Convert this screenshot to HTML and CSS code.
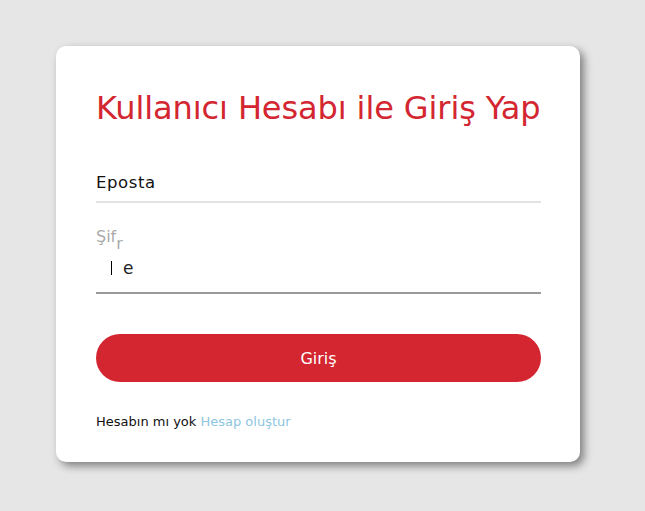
FILE: index.html
```html
<!DOCTYPE html>
<html lang="tr">
<head>
<meta charset="utf-8">
<title>Giriş</title>
<link rel="stylesheet" href="styles.css">
</head>
<body>
<main class="card">
  <h1 class="title">Kullanıcı Hesabı ile Giriş Yap</h1>
  <div class="field field-email">
    <span class="value">Eposta</span>
  </div>
  <div class="field field-pass">
    <div class="float-label"><span>Şif</span><span class="drop">r</span></div>
    <div class="pass-line"><span class="caret"></span><span class="ghost">e</span></div>
  </div>
  <button class="btn" type="button">Giriş</button>
  <p class="footer">Hesabın mı yok <a class="link" href="#">Hesap oluştur</a></p>
</main>
</body>
</html>
```
FILE: styles.css
```css
html, body {
  margin: 0;
  padding: 0;
  background: #e6e6e6;
  height: 100%;
}
body {
  font-family: "DejaVu Sans", "Open Sans", sans-serif;
  padding: 46px 0 0 56px;
  box-sizing: border-box;
}
.card {
  width: 524px;
  height: 416px;
  box-sizing: border-box;
  background: #fff;
  border-radius: 10px;
  box-shadow: 4px 4px 8px rgba(0,0,0,0.45);
  padding: 40px 40px 0 40px;
}
.title {
  margin: 0;
  color: #d32630;
  font-weight: 400;
  font-size: 32px;
  line-height: 42px;
  padding-top: 1px;
  white-space: nowrap;
  letter-spacing: -0.1px;
}
.field {
  width: 445px;
}
.field-email {
  margin-top: 31px;
  border-bottom: 2px solid #e3e3e3;
  height: 43px;
  box-sizing: border-box;
}
.field-email .value {
  display: block;
  font-size: 16.5px;
  letter-spacing: 0.6px;
  line-height: 22px;
  padding-top: 12px;
  color: #111;
}
.field-pass {
  margin-top: 24px;
  border-bottom: 2px solid #9a9a9a;
  height: 67px;
  box-sizing: border-box;
}
.float-label {
  font-size: 16px;
  line-height: 20px;
  color: #aaa;
}
.float-label .drop {
  display: inline-block;
  transform: translateY(7px);
}
.pass-line {
  display: flex;
  align-items: center;
  height: 24px;
  margin-top: 9px;
  padding-left: 15px;
  font-size: 17px;
  color: #222;
}
.caret {
  width: 1px;
  height: 14px;
  background: #000;
  margin-right: 11px;
}
.btn {
  display: block;
  margin-top: 40px;
  width: 445px;
  height: 48px;
  border: 0;
  border-radius: 24px;
  background: #d32630;
  color: #fff;
  font-family: inherit;
  font-size: 16px;
  cursor: pointer;
}
.footer {
  margin: 32px 0 0 0;
  font-size: 13px;
  color: #111;
}
.link {
  color: #8ec5e0;
  text-decoration: none;
}
```
